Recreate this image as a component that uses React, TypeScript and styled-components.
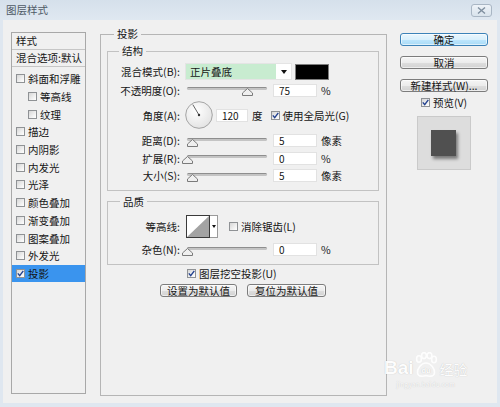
import React from "react";
import styled, { createGlobalStyle } from "styled-components";

const GlobalStyle = createGlobalStyle`
  html, body { margin: 0; padding: 0; background: #f0f0f0; }
  body {
    font-family: "Noto Sans CJK SC", "Noto Sans", sans-serif;
    font-size: 10.5px;
    color: #151515;
  }
  * { box-sizing: border-box; }
`;

const Window = styled.div`
  position: relative;
  width: 500px;
  height: 407px;
  display: flex;
  flex-direction: column;
  background: #dfe7f0;
  overflow: hidden;
`;

const TitleBar = styled.div`
  height: 20px;
  flex: none;
  display: flex;
  align-items: center;
  justify-content: space-between;
  padding: 0 8px 0 6px;
  background: linear-gradient(#d5e0eb, #dfe8f1);
`;

const Title = styled.span`
  color: #4f5a66;
  line-height: 14px;
`;

const CloseButton = styled.div`
  width: 21px;
  height: 13px;
  display: flex;
  align-items: center;
  justify-content: center;
  border: 1px solid #a9b6c4;
  border-radius: 3px;
  background: linear-gradient(#eef3f8, #d9e3ec);
`;

const Body = styled.div`
  flex: 1;
  display: flex;
  align-items: stretch;
  margin: 0 3px 4px;
  padding-left: 8px;
  background: #f0f0f0;
`;

/* ---------- left style list ---------- */
const StyleList = styled.div`
  width: 75px;
  flex: none;
  margin: 12px 0 9px;
  border: 1px solid #a8a8a8;
  display: flex;
  flex-direction: column;
`;

const ListHeader = styled.div`
  height: 17px;
  line-height: 16px;
  padding-left: 4px;
  border-bottom: 1px solid #c6c6c6;
  white-space: nowrap;
`;

const ListBody = styled.div`
  padding-top: 3px;
`;

const ListItem = styled.div<{ $indent?: boolean; $selected?: boolean }>`
  height: 17.7px;
  display: flex;
  align-items: center;
  padding-left: ${(p) => (p.$indent ? 16 : 4)}px;
  background: ${(p) => (p.$selected ? "#3a94ee" : "transparent")};
  white-space: nowrap;
  overflow: hidden;
`;

const ItemText = styled.span`
  margin-left: 3px;
`;

/* ---------- checkbox ---------- */
const Box = styled.span`
  display: inline-flex;
  align-items: center;
  justify-content: center;
  width: 9px;
  height: 9px;
  flex: none;
  border: 1px solid #8f9295;
  background: linear-gradient(135deg, #d6d6d6 0%, #f2f2f2 65%, #ffffff 100%);
`;

function CheckBox({ checked }: { checked?: boolean }) {
  return (
    <Box>
      {checked && (
        <svg width="7" height="7" viewBox="0 0 7 7">
          <path d="M0.8 3.4 L2.7 5.6 L6.3 0.9" fill="none" stroke="#22418f" strokeWidth="1.4" />
        </svg>
      )}
    </Box>
  );
}

/* ---------- main group ---------- */
const MainGroup = styled.fieldset`
  width: 287px;
  flex: none;
  margin: 7px 0 7px 14px;
  padding: 3px 7px 0 6px;
  min-width: 0;
  border: 1px solid #b5b5b5;
  display: flex;
  flex-direction: column;
`;

const GroupLegend = styled.legend<{ $offset: number }>`
  margin-left: ${(p) => p.$offset}px;
  padding: 0 3px;
  line-height: 14px;
`;

const SubGroup = styled.fieldset<{ $pt: number; $mt: number }>`
  margin: ${(p) => p.$mt}px 0 0;
  padding: ${(p) => p.$pt}px 0 5px 0;
  min-width: 0;
  border: 1px solid #c2c2c2;
`;

const FieldRow = styled.div<{ $h: number; $mb?: number }>`
  display: flex;
  align-items: center;
  height: ${(p) => p.$h}px;
  margin-bottom: ${(p) => p.$mb ?? 0}px;
  white-space: nowrap;
`;

const FieldLabel = styled.span`
  width: 72px;
  flex: none;
  margin-right: 5px;
  text-align: right;
`;

const SelectBox = styled.div`
  width: 107px;
  height: 17px;
  display: flex;
  background: #fff;
  border: 1px solid #e4e4e4;
`;

const SelectValue = styled.div`
  flex: 1;
  background: #c8ecd0;
  padding-left: 4px;
  line-height: 15px;
`;

const SelectArrow = styled.div`
  width: 15px;
  display: flex;
  align-items: center;
  justify-content: center;
`;

const Swatch = styled.div`
  width: 34px;
  height: 16px;
  margin-left: 3px;
  background: #000;
  border: 1px solid #7d7d7d;
`;

const SliderWrap = styled.div`
  position: relative;
  width: 80px;
  height: 18px;
  margin-left: 2px;
  flex: none;
`;

const Track = styled.div`
  margin-top: 6px;
  height: 3px;
  border-radius: 2px;
  background: #c4c4c4;
  border-top: 1px solid #8e8e8e;
`;

const Thumb = styled.svg`
  position: absolute;
  top: 7px;
  width: 11px;
  height: 8px;
`;

function Slider({ pos }: { pos: number }) {
  return (
    <SliderWrap>
      <Track />
      <Thumb viewBox="0 0 11 8" style={{ left: pos - 5.5 }}>
        <polygon points="5.5,0.5 10.5,5 10.5,7.5 0.5,7.5 0.5,5" fill="#efefef" stroke="#7a7a7a" strokeWidth="1" />
      </Thumb>
    </SliderWrap>
  );
}

const NumBox = styled.div<{ $w: number; $ml: number }>`
  width: ${(p) => p.$w}px;
  height: 13px;
  margin-left: ${(p) => p.$ml}px;
  flex: none;
  background: #fff;
  border: 1px solid #e2e2e2;
  padding-left: 5px;
  line-height: 11px;
  font-size: 10px;
`;

const Unit = styled.span<{ $ml?: number }>`
  margin-left: ${(p) => p.$ml ?? 4}px;
`;

const Dial = styled.svg`
  width: 28px;
  height: 28px;
  flex: none;
`;

const CheckLabel = styled.span`
  margin-left: 3px;
`;

const InlineCheck = styled.span<{ $ml: number }>`
  display: inline-flex;
  align-items: center;
  margin-left: ${(p) => p.$ml}px;
`;

const ContourBox = styled.div`
  display: flex;
  height: 23px;
  margin-left: 1px;
`;

const ContourPreview = styled.svg`
  width: 24px;
  height: 23px;
  border: 1px solid #3a3a3a;
  background: #fff;
`;

const ContourArrow = styled.div`
  width: 8px;
  display: flex;
  align-items: center;
  justify-content: center;
  background: #fff;
  border: 1px solid #9a9a9a;
  border-left: none;
`;

const KnockoutRow = styled.div`
  height: 18px;
  display: flex;
  align-items: center;
  padding-left: 80px;
  white-space: nowrap;
`;

const ButtonPair = styled.div`
  display: flex;
  justify-content: center;
  gap: 10px;
  margin-top: 1px;
`;

const PushButton = styled.div<{ $w: number; $default?: boolean }>`
  width: ${(p) => p.$w}px;
  height: 13px;
  flex: none;
  display: flex;
  align-items: center;
  justify-content: center;
  border: 1px solid ${(p) => (p.$default ? "#3c82b8" : "#7c7c7c")};
  border-radius: 3px;
  background: ${(p) =>
    p.$default
      ? "linear-gradient(#eaf6fd 0%, #d9f0fc 50%, #bee6fd 51%, #a9dbf6 100%)"
      : "linear-gradient(#f5f5f5 0%, #ececec 50%, #dedede 51%, #d2d2d2 100%)"};
  box-shadow: inset 0 0 0 1px rgba(255, 255, 255, 0.6);
  line-height: 11px;
  white-space: nowrap;
`;

/* ---------- right column ---------- */
const SideColumn = styled.div`
  width: 88px;
  flex: none;
  margin-left: 13px;
  padding-top: 13px;
  display: flex;
  flex-direction: column;
  align-items: center;
  gap: 10px;
`;

const PreviewToggle = styled.div`
  height: 15px;
  margin-top: -7px;
  display: flex;
  align-items: center;
  white-space: nowrap;
`;

const PreviewBox = styled.div`
  width: 54px;
  height: 54px;
  margin-top: -4px;
  padding: 13px 0 0 13px;
  background: #dddddd;
  border: 1px solid #cacaca;
`;

const PreviewSquare = styled.div`
  width: 25px;
  height: 26px;
  background: #505050;
  box-shadow: 2px 3px 3px rgba(0, 0, 0, 0.45);
`;

/* ---------- watermark ---------- */
const Watermark = styled.div`
  position: absolute;
  left: 384px;
  top: 352px;
  display: flex;
  flex-direction: column;
  align-items: center;
  color: #fff;
  text-shadow: 0 0 1px rgba(0, 0, 0, 0.25);
  opacity: 0.9;
  pointer-events: none;
`;

const WatermarkLine = styled.div`
  display: flex;
  align-items: flex-end;
  font-family: "Liberation Sans", "Noto Sans", sans-serif;
`;

const WatermarkBai = styled.span`
  font-size: 19px;
  font-weight: bold;
  line-height: 20px;
`;

const WatermarkCn = styled.span`
  font-family: "Noto Sans CJK SC", sans-serif;
  font-size: 14px;
  line-height: 18px;
  margin-left: 2px;
`;

const WatermarkUrl = styled.span`
  font-size: 6px;
  line-height: 8px;
  margin-top: 3px;
  letter-spacing: 0.4px;
`;

const styleItems: { label: string; indent?: boolean; selected?: boolean }[] = [
  { label: "斜面和浮雕" },
  { label: "等高线", indent: true },
  { label: "纹理", indent: true },
  { label: "描边" },
  { label: "内阴影" },
  { label: "内发光" },
  { label: "光泽" },
  { label: "颜色叠加" },
  { label: "渐变叠加" },
  { label: "图案叠加" },
  { label: "外发光" },
  { label: "投影", selected: true },
];

const SmallArrow = () => (
  <svg width="6" height="4" viewBox="0 0 6 4">
    <polygon points="0,0 6,0 3,4" fill="#111" />
  </svg>
);

export default function App() {
  return (
    <>
      <GlobalStyle />
      <Window>
        <TitleBar>
          <Title>图层样式</Title>
          <CloseButton>
            <svg width="9" height="7" viewBox="0 0 9 7">
              <path d="M1 0.5 L8 6.5 M8 0.5 L1 6.5" stroke="#8090a0" strokeWidth="1.4" />
            </svg>
          </CloseButton>
        </TitleBar>

        <Body>
          <StyleList>
            <ListHeader>样式</ListHeader>
            <ListHeader>混合选项:默认</ListHeader>
            <ListBody>
              {styleItems.map((it) => (
                <ListItem key={it.label} $indent={it.indent} $selected={it.selected}>
                  <CheckBox checked={it.selected} />
                  <ItemText>{it.label}</ItemText>
                </ListItem>
              ))}
            </ListBody>
          </StyleList>

          <MainGroup>
            <GroupLegend $offset={7}>投影</GroupLegend>

            <SubGroup $mt={0} $pt={5}>
              <GroupLegend $offset={11}>结构</GroupLegend>
              <FieldRow $h={17} $mb={1}>
                <FieldLabel>混合模式(B):</FieldLabel>
                <SelectBox>
                  <SelectValue>正片叠底</SelectValue>
                  <SelectArrow>
                    <SmallArrow />
                  </SelectArrow>
                </SelectBox>
                <Swatch />
              </FieldRow>
              <FieldRow $h={18} $mb={1}>
                <FieldLabel>不透明度(O):</FieldLabel>
                <Slider pos={60} />
                <NumBox $w={44} $ml={6}>75</NumBox>
                <Unit>%</Unit>
              </FieldRow>
              <FieldRow $h={30} $mb={2}>
                <FieldLabel>角度(A):</FieldLabel>
                <Dial viewBox="0 0 28 28">
                  <defs>
                    <radialGradient id="dialFill" cx="40%" cy="35%" r="70%">
                      <stop offset="0%" stopColor="#ffffff" />
                      <stop offset="100%" stopColor="#e2e2e2" />
                    </radialGradient>
                  </defs>
                  <circle cx="14" cy="14" r="13.3" fill="url(#dialFill)" stroke="#9c9c9c" strokeWidth="0.9" />
                  <line x1="14" y1="14" x2="7.8" y2="3.6" stroke="#555" strokeWidth="0.9" />
                  <circle cx="14" cy="14" r="1.2" fill="#333" />
                </Dial>
                <NumBox $w={32} $ml={3}>120</NumBox>
                <Unit>度</Unit>
                <InlineCheck $ml={8}>
                  <CheckBox checked />
                  <CheckLabel>使用全局光(G)</CheckLabel>
                </InlineCheck>
              </FieldRow>
              <FieldRow $h={17.5}>
                <FieldLabel>距离(D):</FieldLabel>
                <Slider pos={5} />
                <NumBox $w={44} $ml={6}>5</NumBox>
                <Unit>像素</Unit>
              </FieldRow>
              <FieldRow $h={17.5}>
                <FieldLabel>扩展(R):</FieldLabel>
                <Slider pos={0.5} />
                <NumBox $w={44} $ml={6}>0</NumBox>
                <Unit>%</Unit>
              </FieldRow>
              <FieldRow $h={17.5}>
                <FieldLabel>大小(S):</FieldLabel>
                <Slider pos={5} />
                <NumBox $w={44} $ml={6}>5</NumBox>
                <Unit>像素</Unit>
              </FieldRow>
            </SubGroup>

            <SubGroup $mt={4} $pt={6}>
              <GroupLegend $offset={12}>品质</GroupLegend>
              <FieldRow $h={23} $mb={3}>
                <FieldLabel>等高线:</FieldLabel>
                <ContourBox>
                  <ContourPreview viewBox="0 0 22 21" preserveAspectRatio="none">
                    <polygon points="0,21 22,0 22,21" fill="#a3a3a3" />
                  </ContourPreview>
                  <ContourArrow>
                    <svg width="4" height="3" viewBox="0 0 4 3">
                      <polygon points="0,0 4,0 2,3" fill="#111" />
                    </svg>
                  </ContourArrow>
                </ContourBox>
                <InlineCheck $ml={11}>
                  <CheckBox />
                  <CheckLabel>消除锯齿(L)</CheckLabel>
                </InlineCheck>
              </FieldRow>
              <FieldRow $h={18}>
                <FieldLabel>杂色(N):</FieldLabel>
                <Slider pos={0.5} />
                <NumBox $w={44} $ml={6}>0</NumBox>
                <Unit>%</Unit>
              </FieldRow>
            </SubGroup>

            <KnockoutRow>
              <CheckBox checked />
              <CheckLabel>图层挖空投影(U)</CheckLabel>
            </KnockoutRow>
            <ButtonPair>
              <PushButton $w={77}>设置为默认值</PushButton>
              <PushButton $w={79}>复位为默认值</PushButton>
            </ButtonPair>
          </MainGroup>

          <SideColumn>
            <PushButton $w={88} $default>确定</PushButton>
            <PushButton $w={88}>取消</PushButton>
            <PushButton $w={88}>新建样式(W)...</PushButton>
            <PreviewToggle>
              <CheckBox checked />
              <CheckLabel>预览(V)</CheckLabel>
            </PreviewToggle>
            <PreviewBox>
              <PreviewSquare />
            </PreviewBox>
          </SideColumn>
        </Body>

        <Watermark>
          <WatermarkLine>
            <WatermarkBai>Bai</WatermarkBai>
            <svg width="24" height="26" viewBox="0 0 24 26">
              <g fill="none" stroke="#fff" strokeWidth="1.6">
                <ellipse cx="5" cy="7" rx="2.4" ry="3.2" />
                <ellipse cx="10" cy="3.6" rx="2.4" ry="3" />
                <ellipse cx="15.5" cy="3.6" rx="2.4" ry="3" />
                <ellipse cx="20" cy="7.5" rx="2.4" ry="3.2" />
                <path d="M12 11 C7 11 3 17 3.5 21 C4 25 9 24.5 12 23.5 C15 24.5 20 25 20.5 21 C21 17 17 11 12 11 Z" />
              </g>
              <text x="12" y="21" textAnchor="middle" fontSize="7.5" fontWeight="bold" fill="#fff" fontFamily="Liberation Sans, sans-serif">du</text>
            </svg>
            <WatermarkCn>经验</WatermarkCn>
          </WatermarkLine>
          <WatermarkUrl>jingyan.baidu.com</WatermarkUrl>
        </Watermark>
      </Window>
    </>
  );
}
